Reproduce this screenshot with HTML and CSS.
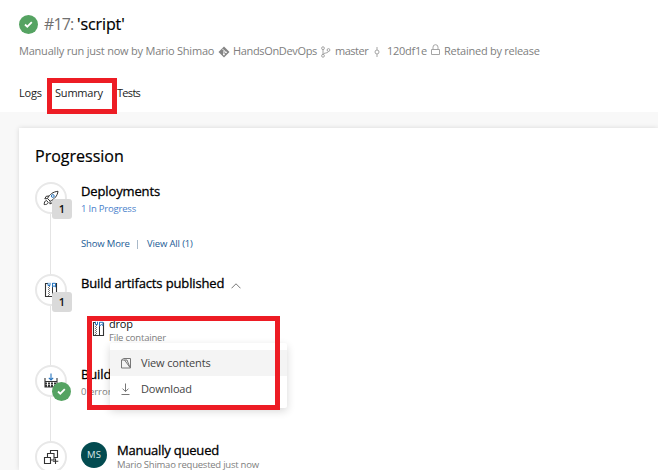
FILE: index.html
```html
<!DOCTYPE html>
<html lang="en">
<head>
<meta charset="utf-8">
<title>#17: 'script'</title>
<link rel="stylesheet" href="styles.css">
</head>
<body>
<header class="header">
  <div class="title-row">
    <svg class="status" viewBox="0 0 19 19"><circle cx="9.5" cy="9.5" r="9.5" fill="#55a362"/><path d="M6 9.5l2.300 2.200 4.500-4.500" fill="none" stroke="#fff" stroke-width="1.8"/></svg>
    <h1 class="title"><span class="run-no">#17:</span><span class="run-name">'script'</span></h1>
  </div>
  <div class="meta">
    <span class="by">Manually run just now by Mario Shimao</span>
    <svg class="mi git" viewBox="0 0 12 12"><path d="M6 .5L11.5 6 6 11.5.5 6z" fill="#858585"/><path d="M4.3 2.8l1.6 1.6v4M6 4.6l2 1.8" fill="none" stroke="#fff" stroke-width=".9"/><circle cx="5.9" cy="8.4" r=".9" fill="#fff"/><circle cx="8" cy="6.3" r=".9" fill="#fff"/></svg>
    <span class="repo">HandsOnDevOps</span>
    <svg class="mi branch" viewBox="0 0 12 12"><g fill="none" stroke="#9a9a9a" stroke-width=".9"><circle cx="3" cy="2.2" r="1.4"/><circle cx="8.500" cy="4" r="1.4"/><circle cx="3" cy="9.8" r="1.4"/><path d="M3 3.6v4.8M8.500 5.4C8.500 7.6 3 6.500 3 8.4"/></g></svg>
    <span class="ref">master</span>
    <svg class="mi commit" viewBox="0 0 12 12"><g fill="none" stroke="#a5a5a5"><circle cx="6" cy="6" r="2"/><path d="M6 1v3M6 8v3"/></g></svg>
    <span class="sha">120df1e</span>
    <svg class="mi lock" viewBox="0 0 12 12"><path d="M1.5 5.5h8v5h-8zM3 5.5V3.2a2.5 2.5 0 0 1 5 0v2.3" fill="none" stroke="#a5a5a5"/></svg>
    <span class="retained">Retained by release</span>
  </div>
  <nav class="tabs">
    <a class="tab logs">Logs</a><a class="tab summary">Summary</a><a class="tab tests">Tests</a>
  </nav>
</header>
<main class="card">
  <h2 class="heading">Progression</h2>
  <ol class="timeline">
    <li class="step deploy">
      <div class="rail">
        <div class="node"><svg viewBox="0 0 16 16"><g fill="none" stroke="#333" stroke-width="1"><path d="M4.500 8.500C6.500 4.500 10 1.700 15 1.300c-.6 4.700-3.600 7.700-7.800 9.900z"/><path d="M6 6L3.200 6.300 1.800 8.800l2.700-.2M9.500 10l-.2 2.700L6.900 14l.2-2.700"/><circle cx="9.800" cy="6" r="1.400" stroke="#2774bd"/><path d="M3.500 10.500C1.500 11 1.300 12.500 1.200 14.600c2 0 3.500-.3 4-2.200z"/></g></svg></div>
        <span class="count">1</span>
      </div>
      <div class="body">
        <h3 class="name n1">Deployments</h3>
        <p class="state">1 In Progress</p>
        <p class="links"><a class="more">Show More</a><span class="sep"></span><a class="all">View All (1)</a></p>
      </div>
    </li>
    <li class="step artifacts">
      <div class="rail">
        <div class="node"><svg viewBox="0 0 14 16"><path d="M4 1.500H1.500v13h11v-13H11.500" fill="none" stroke="#333" stroke-width="1.100"/><path d="M4.500 5v9" stroke="#777" stroke-dasharray="1 1"/><path d="M5.500 4v10" stroke="#777" stroke-dasharray="1 1"/><path d="M8.500 5v9.500" stroke="#333"/><path d="M4 .8v2.700h2V.8M8.500 1v4M8.500 1.300h3V5L10 3.700 8.500 5" fill="none" stroke="#2774bd"/></svg></div>
        <span class="count">1</span>
      </div>
      <div class="body">
        <h3 class="name n2"><span>Build artifacts published</span><svg class="chev" viewBox="0 0 10 6"><path d="M.5 5.3L5 .8l4.500 4.500" fill="none" stroke="#555" stroke-width=".8"/></svg></h3>
        <div class="artifact">
          <svg class="file" viewBox="0 0 14 16"><path d="M4 1.500H1.500v13h10v-13" fill="none" stroke="#333" stroke-width="1.100"/><path d="M3.500 5v9" stroke="#777" stroke-dasharray="1 1"/><path d="M4.500 4v10" stroke="#777" stroke-dasharray="1 1"/><path d="M7.500 5v9.500" stroke="#333"/><path d="M3.500 .8v2.700h2V.8M7.500 1v4M7.500 1.300h3.500V4.500L9.500 3.500 7.500 5" fill="none" stroke="#2774bd"/></svg>
          <div><p class="drop">drop</p><p class="kind">File container</p></div>
          <div class="menu">
            <div class="item hover"><svg viewBox="0 0 12 12"><path d="M1.500 3v8h9V1.500H3.500L1.500 3h5.500l3 7.500M4.500 3L10 10.500" fill="none" stroke="#777"/></svg><span class="view">View contents</span></div>
            <div class="item"><svg viewBox="0 0 12 12"><path d="M5.500 .5v8M2.500 5.600l3 3 3-3M1.500 11.500h8" fill="none" stroke="#777"/></svg><span class="download">Download</span></div>
          </div>
        </div>
      </div>
    </li>
    <li class="step build">
      <div class="rail">
        <div class="node"><svg viewBox="0 0 16 16"><path d="M8 .5v6.500M5.800 4.800L8 7l2.200-2.200" fill="none" stroke="#2774bd" stroke-width="1.100"/><path d="M2 5v9h12V5M2 8.500h12" fill="none" stroke="#333" stroke-width="1.100"/><path d="M2 10.500h12M2 13h12" fill="none" stroke="#333" stroke-width="1.800" stroke-dasharray="2 1"/></svg></div>
        <svg class="done" viewBox="0 0 19 19"><circle cx="9.500" cy="9.500" r="9.500" fill="#55a362"/><path d="M6 9.500l2.300 2.200 4.500-4.500" fill="none" stroke="#fff" stroke-width="1.800"/></svg>
      </div>
      <div class="body">
        <h3 class="name n3">Build</h3>
        <p class="errors">0 errors</p>
      </div>
    </li>
    <li class="step queued">
      <div class="rail">
        <div class="node"><svg viewBox="0 0 16 16"><g fill="#fff" stroke="#333" stroke-width="1.100"><path d="M7.500 1.500h7v7h-7z"/><path d="M4.500 4.500h6.500v6.500H4.500z"/><path d="M1.500 8.500h6v6h-6z"/><path d="M12.500 9.500v5.500M9.800 12.300h5.500"/></g></svg></div>
      </div>
      <div class="body who">
        <span class="avatar">MS</span>
        <div><h3 class="name n4">Manually queued</h3><p class="requested">Mario Shimao requested just now</p></div>
      </div>
    </li>
  </ol>
</main>
<div class="mark mark-tab"></div>
<div class="mark mark-menu"></div>
</body>
</html>
```
FILE: styles.css
```css
* { box-sizing: border-box; margin: 0; padding: 0; }
body { position: relative; width: 658px; height: 470px; overflow: hidden; background: #f8f8f8; color: #111; font-family: "Open Sans", "Noto Sans", sans-serif; font-size: 11px; }
svg { display: block; flex: none; }
span, p, h3, a { white-space: nowrap; }
.header { height: 112px; background: #fff; padding: 14px 0 0 19px; }
.title-row { display: flex; align-items: center; height: 21px; }
.status { width: 19px; height: 19px; }
.title { display: flex; margin-left: 6px; font-size: 16px; font-weight: 400; line-height: 21px; }
.run-no { width: 33px; color: #707070; letter-spacing: -.9px; }
.run-name { font-weight: 500; color: #000; letter-spacing: -.1px; -webkit-text-stroke: .2px #000; }
.meta { display: flex; align-items: center; height: 16px; margin-top: 8px; color: #808080; letter-spacing: -.26px; }
.meta span { line-height: 16px; }
.mi { width: 12px; height: 12px; margin-top: 2px; }
.by { width: 199px; letter-spacing: -.21px; }
.repo { width: 85px; margin-left: 3px; letter-spacing: -.34px; }
.branch { margin-left: 2px; }
.ref { width: 34px; margin-left: 3px; letter-spacing: -.5px; }
.commit { margin-left: 2px; }
.sha { width: 40px; margin-left: 4px; }
.lock { margin: -3px 0 0 3px; }
.retained { margin-left: 2px; }
.tabs { display: flex; margin-top: 26px; line-height: 16px; color: #222; letter-spacing: -.2px; }
.tests { letter-spacing: -.7px; }
.logs { width: 36px; }
.summary { width: 62px; }
.card { height: 342px; margin: 16px 0 0 19px; padding: 17px 0 0 16px; background: #fff; box-shadow: 0 0 5px rgba(0,0,0,.13); }
.heading { font-size: 16px; font-weight: 500; line-height: 22px; color: #000; -webkit-text-stroke: .2px #000; }
.timeline { list-style: none; margin-top: 15px; }
.step { display: flex; }
.deploy { height: 92px; }
.artifacts { height: 91px; }
.build { height: 76px; }
.rail { position: relative; width: 32px; height: 100%; background: linear-gradient(#e4e4e4, #e4e4e4) 15px 0 / 1px 100% no-repeat; }
.node { display: flex; align-items: center; justify-content: center; width: 32px; height: 32px; background: #fff; border: 2px solid #e8e8e8; border-radius: 50%; }
.node svg { width: 16px; height: 16px; }
.count { position: absolute; left: 17px; top: 17px; width: 20px; height: 20px; border-radius: 3px; background: #dadada; text-align: center; font-size: 11px; font-weight: 600; line-height: 20px; }
.artifacts .count { top: 18px; }
.done { position: absolute; left: 17px; top: 17px; width: 19px; height: 19px; }
.body { margin-left: 14px; }
.name { font-size: 13px; font-weight: 500; line-height: 18px; color: #000; letter-spacing: -.13px; -webkit-text-stroke: .3px #000; }
.state { margin-top: 2px; font-size: 9.5px; line-height: 14px; color: #4a7fcb; letter-spacing: -.2px; }
.links { display: flex; align-items: center; margin-top: 21px; font-size: 9.5px; line-height: 14px; color: #1c5c96; letter-spacing: -.15px; }
.more { width: 56px; }
.sep { width: 1px; height: 9px; margin-right: 9px; background: #a9b9c9; }
.n2 { display: flex; }
.n4 { letter-spacing: -.2px; }
.chev { width: 10px; height: 6px; margin: 9px 0 0 7px; }
.artifact { position: relative; display: flex; margin: 24px 0 0 11px; }
.file { width: 14px; height: 16px; margin: 5px 3px 0 0; }
.drop { font-size: 11px; line-height: 16px; letter-spacing: -.2px; }
.kind { font-size: 9.5px; line-height: 11px; color: #808080; letter-spacing: -.2px; }
.menu { position: absolute; z-index: 1; left: 18px; top: 27px; width: 177px; height: 65px; padding-top: 7px; background: #fff; border-radius: 2px; box-shadow: 0 3px 9px rgba(0,0,0,.16); }
.item { display: flex; align-items: center; height: 26px; padding-left: 10px; color: #444; }
.item span { line-height: 16px; letter-spacing: -.15px; }
.item svg { width: 12px; height: 12px; margin-right: 9px; }
.hover { background: #f4f4f4; }
.errors { font-size: 9.5px; line-height: 14px; color: #808080; margin-top: 2px; }
.who { display: flex; }
.avatar { width: 26px; height: 26px; margin: 1px 10px 0 0; border-radius: 50%; background: #034b50; color: #d7e7e7; font-size: 9.5px; line-height: 26px; text-align: center; }
.requested { font-size: 9.5px; line-height: 11px; color: #808080; letter-spacing: -.24px; }
.mark { position: absolute; z-index: 2; border: 5px solid #ed1c24; }
.mark-tab { left: 47px; top: 78px; width: 70px; height: 36px; }
.mark-menu { left: 87px; top: 316px; width: 193px; height: 94px; }
```
